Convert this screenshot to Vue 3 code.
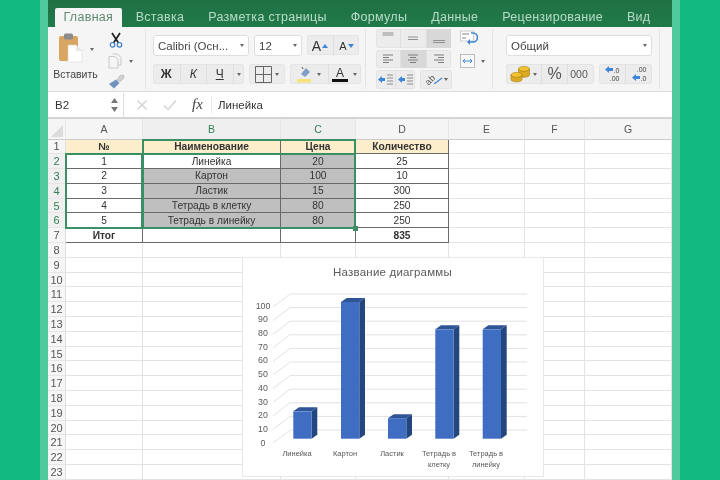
<template>
  <div class="page">
    <div class="window">
      <!-- вкладки -->
      <div class="tabs">
        <span v-for="(t, i) in tabs" :key="t" class="tab" :class="{ active: i === 0 }">{{ t }}</span>
      </div>

      <!-- лента -->
      <div class="ribbon">
        <div class="group g-clip">
          <div class="paste">
            <svg class="ic-paste" width="26" height="30" viewBox="0 0 26 30">
              <rect x="1" y="3" width="19" height="25" rx="2" fill="#d9a662" />
              <rect x="6" y="0.5" width="9" height="6" rx="1.5" fill="#8c8c8c" />
              <path d="M10 12h8l6 6v11H10z" fill="#fff" stroke="#d8d8d8" stroke-width=".6" />
              <path d="M18 12v6h6" fill="#e8e8e8" />
            </svg>
            <span class="paste-label">Вставить</span>
          </div>
          <span class="caret paste-caret"></span>
          <div class="clip-tools">
            <svg width="16" height="16" viewBox="0 0 16 16">
              <path d="M4 1l6.5 10M12 1L5.500 11" stroke="#222" stroke-width="1.7" fill="none" />
              <circle cx="4.500" cy="12.800" r="2.300" fill="none" stroke="#3f7fc9" stroke-width="1.200" />
              <circle cx="11.500" cy="12.800" r="2.300" fill="none" stroke="#3f7fc9" stroke-width="1.200" />
            </svg>
            <div class="copy-row">
              <svg width="14" height="16" viewBox="0 0 14 16">
                <path d="M1 3.500h6l3 3v8.500H1z" fill="#f5f5f5" stroke="#c8c8c8" />
                <path d="M4.500 1h5l3.500 3.500V12h-3" fill="none" stroke="#c8c8c8" />
              </svg>
              <span class="caret"></span>
            </div>
            <svg width="17" height="15" viewBox="0 0 17 15">
              <path d="M9 6l3-4.500 3.500-.5.500 3-3.500 3.500z" fill="#d0d0d0" stroke="#a8a8a8" stroke-width=".5" />
              <path d="M1 10l7-4.500 3.500 3.500L6 14.500z" fill="#6f93bd" />
            </svg>
          </div>
        </div>

        <div class="group g-font">
          <div class="row">
            <div class="select font-sel"><span>Calibri (Осн...</span><i class="caret"></i></div>
            <div class="select size-sel"><span>12</span><i class="caret"></i></div>
            <div class="btns">
              <span class="btn grow-a">A<svg width="6" height="4" viewBox="0 0 6 4"><path d="M0 4l3-4 3 4z" fill="#3f86d6" /></svg></span>
              <span class="btn shrink-a">A<svg width="6" height="4" viewBox="0 0 6 4"><path d="M0 0l3 4 3-4z" fill="#3f86d6" /></svg></span>
            </div>
          </div>
          <div class="row row2">
            <div class="btns biu">
              <span class="btn b-w bold">Ж</span>
              <span class="btn b-w ital">К</span>
              <span class="btn b-w under">Ч</span>
              <span class="btn b-c"><i class="caret"></i></span>
            </div>
            <div class="btns borders">
              <span class="btn">
                <svg width="17" height="17" viewBox="0 0 17 17"><path d="M.5.500h16v16H.5zM8.500.500v16M.5 8.500h16" fill="none" stroke="#666" /></svg>
                <i class="caret"></i>
              </span>
            </div>
            <div class="btns colors">
              <span class="btn">
                <svg width="16" height="18" viewBox="0 0 16 18">
                  <path d="M5 9l5-6 4 4-5 5z" fill="#7d9fc7" />
                  <path d="M6 2l1 2" stroke="#555" />
                  <rect x="1" y="14" width="14" height="3.500" fill="#f7e27a" />
                </svg>
                <i class="caret"></i>
              </span>
              <span class="btn color-a">
                <span class="a-mark">A</span>
                <i class="caret"></i>
              </span>
            </div>
          </div>
        </div>

        <div class="group g-align">
          <div class="align-col">
            <div class="btns al">
              <span v-for="(v, i) in valign" :key="i" class="btn" :class="{ on: i === 2 }">
                <svg width="14" height="14" viewBox="0 0 14 14"><path :d="v" stroke="#8f8f8f" stroke-width="1.200" fill="none" /></svg>
              </span>
            </div>
            <div class="btns al">
              <span v-for="(v, i) in halign" :key="i" class="btn" :class="{ on: i === 1 }">
                <svg width="14" height="14" viewBox="0 0 14 14"><path :d="v" stroke="#7c7c7c" fill="none" /></svg>
              </span>
            </div>
            <div class="al-last">
              <div class="btns al-ind">
                <span v-for="n in 2" :key="n" class="btn">
                  <svg width="15" height="11" viewBox="0 0 15 11">
                    <path d="M0 5.500l4-3.500v2h3v3H4v2z" fill="#3f86d6" />
                    <path d="M9 1h6M9 4h6M9 7h6M9 10h6" stroke="#8a8a8a" />
                  </svg>
                </span>
              </div>
              <div class="btns al-rot">
                <span class="btn">
                  <span class="ab">ab</span>
                  <svg class="ab-line" width="9" height="9" viewBox="0 0 9 9"><path d="M0 9l8-6" stroke="#3f86d6" stroke-width="1.300" /></svg>
                  <i class="caret"></i>
                </span>
              </div>
            </div>
          </div>
          <div class="wrap-col">
            <svg width="18" height="16" viewBox="0 0 18 16">
              <rect x=".5" y="1" width="13" height="10" fill="#fff" stroke="#ccc" />
              <path d="M2 4h7M2 8h4" stroke="#888" />
              <path d="M11 3h2a3.500 3.500 0 010 9H9" stroke="#3f86d6" stroke-width="1.600" fill="none" />
              <path d="M10 9l-3 3 3 3z" fill="#3f86d6" />
            </svg>
            <div class="merge">
              <svg width="15" height="14" viewBox="0 0 15 14">
                <rect x=".5" y=".5" width="14" height="13" fill="#f8f8f8" stroke="#bdbdbd" />
                <path d="M3 7h9M5 5L3 7l2 2M10 5l2 2-2 2" stroke="#3f86d6" fill="none" />
              </svg>
              <span class="caret"></span>
            </div>
          </div>
        </div>

        <div class="group g-num">
          <div class="select num-sel"><span>Общий</span><i class="caret"></i></div>
          <div class="row row2 num-row">
            <div class="btns money">
              <span class="btn coins">
                <svg width="20" height="18" viewBox="0 0 20 18">
                  <ellipse cx="14" cy="4" rx="5.500" ry="2.600" fill="#f2c230" stroke="#a97f16" stroke-width=".6" />
                  <path d="M8.500 4v6c0 3 11 3 11 0V4c0 3-11 3-11 0z" fill="#dba922" stroke="#a97f16" stroke-width=".6" />
                  <ellipse cx="6.500" cy="10" rx="5.500" ry="2.600" fill="#f2c230" stroke="#a97f16" stroke-width=".6" />
                  <path d="M1 10v4.500c0 3 11 3 11 0V10c0 3-11 3-11 0z" fill="#dba922" stroke="#a97f16" stroke-width=".6" />
                </svg>
                <i class="caret"></i>
              </span>
              <span class="btn pct">%</span>
              <span class="btn thou">000</span>
            </div>
            <div class="btns dec">
              <span class="btn">
                <span class="dec-txt"><svg width="8" height="7" viewBox="0 0 8 7"><path d="M0 3.500L4 0v2h4v3H4v2z" fill="#3f86d6" /></svg>.0<br />.00</span>
              </span>
              <span class="btn">
                <span class="dec-txt">.00<br /><svg width="8" height="7" viewBox="0 0 8 7"><path d="M0 3.500L4 0v2h4v3H4v2z" fill="#3f86d6" /></svg>.0</span>
              </span>
            </div>
          </div>
        </div>
      </div>

      <!-- строка формул -->
      <div class="formula">
        <div class="name-box">
          <span>B2</span>
          <svg width="7" height="16" viewBox="0 0 7 16"><path d="M0 6l3.500-5L7 6zM0 10l3.500 5L7 10z" fill="#777" /></svg>
        </div>
        <div class="fx-tools">
          <svg width="12" height="12" viewBox="0 0 12 12"><path d="M1.500 1.500l9 9M10.500 1.500l-9 9" stroke="#d4d4d4" stroke-width="1.500" /></svg>
          <svg width="14" height="12" viewBox="0 0 14 12"><path d="M1 6.500L5 10.500 13 1.500" stroke="#d4d4d4" stroke-width="1.500" fill="none" /></svg>
          <span class="fx">fx</span>
        </div>
        <span class="formula-text">Линейка</span>
      </div>

      <!-- лист -->
      <div class="sheet-wrap">
        <div class="sheet">
          <div class="corner"><i></i></div>
          <div v-for="c in columns" :key="c" class="col-head" :class="{ sel: c === 'B' || c === 'C' }">{{ c }}</div>
          <template v-for="r in rowCount" :key="r">
            <div class="row-head" :class="{ sel: r >= 2 && r <= 6 }">{{ r }}</div>
            <div v-for="(c, ci) in columns" :key="c" class="cell" :class="cellClass(r, ci)">{{ cellText(r, ci) }}</div>
          </template>
        </div>

        <!-- выделение: та же сетка поверх листа -->
        <div class="sheet ranges">
          <div class="range range-a"></div>
          <div class="range range-bc"><i class="handle"></i></div>
          <div class="range range-head"></div>
        </div>

        <!-- диаграмма -->
        <div class="chart">
          <svg width="300" height="218" viewBox="243 258 300 218">
            <text x="392.500" y="276" class="c-title" text-anchor="middle">Название диаграммы</text>
            <g stroke="#e2e2e2" stroke-width="1" fill="none">
              <path v-for="t in ticks" :key="t" :d="gridPath(t)" />
            </g>
            <text v-for="t in ticks" :key="'l' + t" x="263" :y="445.600 - t * 1.37" class="c-axis" text-anchor="middle">{{ t }}</text>
            <g v-for="b in bars" :key="b.x">
              <path :d="`M${b.x} ${barTop(b)}l5.700-4h18.300l-5.700 4z`" fill="#2f5597" />
              <path :d="`M${b.x + 18.300} ${barTop(b)}l5.700-4V434.700L${b.x + 18.300} 438.700z`" fill="#24467f" />
              <rect :x="b.x" :y="barTop(b)" width="18.300" :height="438.700 - barTop(b)" fill="#3f6dc2" />
            </g>
            <g v-for="b in bars" :key="'t' + b.x">
              <text v-for="(l, i) in b.label" :key="l" :x="b.cx" :y="456 + i * 10.700" class="c-cat" text-anchor="middle">{{ l }}</text>
            </g>
          </svg>
        </div>
      </div>
    </div>
  </div>
</template>

<script setup>
const tabs = ['Главная', 'Вставка', 'Разметка страницы', 'Формулы', 'Данные', 'Рецензирование', 'Вид']
const columns = ['A', 'B', 'C', 'D', 'E', 'F', 'G']
const rowCount = 23

const table = [
  ['№', 'Наименование', 'Цена', 'Количество'],
  ['1', 'Линейка', '20', '25'],
  ['2', 'Картон', '100', '10'],
  ['3', 'Ластик', '15', '300'],
  ['4', 'Тетрадь в клетку', '80', '250'],
  ['5', 'Тетрадь в линейку', '80', '250'],
  ['Итог', '', '', '835']
]

const valign = ['M1.500 2h11M1.500 4h11', 'M2 6h10M2 8.500h10', 'M1 9.500h12M1 11.500h12']
const halign = [
  'M2 3h10M2 5.500h6M2 8h10M2 10.500h6',
  'M2 3h10M4 5.500h6M2 8h10M4 10.500h6',
  'M2 3h10M6 5.500h6M2 8h10M6 10.500h6'
]

const ticks = [0, 10, 20, 30, 40, 50, 60, 70, 80, 90, 100]
const bars = [
  { x: 293.3, cx: 297, v: 20, label: ['Линейка'] },
  { x: 341, cx: 345, v: 100, label: ['Картон'] },
  { x: 388, cx: 392, v: 15, label: ['Ластик'] },
  { x: 435.3, cx: 439, v: 80, label: ['Тетрадь в', 'клетку'] },
  { x: 482.7, cx: 486, v: 80, label: ['Тетрадь в', 'линейку'] }
]

const barTop = (b) => 438.7 - b.v * 1.367

const gridPath = (t) => {
  const y = 430 - t * 1.36
  return `M273 ${y + 13}L290 ${y}H527`
}

const cellText = (r, ci) => table[r - 1]?.[ci] ?? ''

const cellClass = (r, ci) => {
  const inTable = r <= 7 && ci <= 3
  return {
    tbl: inTable,
    head: r === 1 && ci <= 3,
    grey: (r >= 3 && r <= 6 && ci === 1) || (r >= 2 && r <= 6 && ci === 2),
    strong: r === 7 && (ci === 0 || ci === 3)
  }
}
</script>

<style>
html,
body {
  margin: 0;
  background: #12b981;
}
</style>

<style scoped>
.page {
  width: 720px;
  height: 480px;
  overflow: hidden;
  box-sizing: border-box;
  padding: 0 40px;
  background: #12b981;
  font-family: "Liberation Sans", Arial, sans-serif;
  filter: blur(0.35px);
}

.window {
  height: 480px;
  border: solid #4fca9c;
  border-width: 0 8px;
  background: #fff;
  overflow: hidden;
}

.tabs {
  height: 27px;
  box-sizing: border-box;
  padding: 8px 0 0 7px;
  display: flex;
  background: linear-gradient(#1f7044, #217a4a);
}

.tab {
  padding: 0 12px;
  font-size: 12.500px;
  letter-spacing: 0.3px;
  line-height: 19px;
  color: #b9dcc8;
  white-space: nowrap;
}

.tab.active {
  background: #f5f5f5;
  color: #5f8a72;
  padding: 0 8.500px;
  margin-right: 2px;
  border-radius: 2px 2px 0 0;
}

.ribbon {
  height: 65px;
  box-sizing: border-box;
  display: flex;
  background: #f5f5f5;
  border-bottom: 1px solid #dcdcdc;
}

.group {
  box-sizing: border-box;
  border-right: 1px solid #e4e4e4;
  margin: 2px 0;
}

.g-clip {
  width: 98px;
  display: flex;
  position: relative;
}

.paste {
  width: 54px;
  display: flex;
  flex-direction: column;
  align-items: center;
  padding: 4px 0 0 1px;
  box-sizing: border-box;
  position: relative;
}

.ic-paste {
  margin-left: -9px;
}

.paste-label {
  font-size: 10.500px;
  margin-top: 5px;
  color: #444;
  white-space: nowrap;
}

.paste-caret {
  position: absolute;
  left: 42px;
  top: 19px;
}

.clip-tools {
  margin-left: 6px;
  display: flex;
  flex-direction: column;
  gap: 5px;
  padding-top: 3px;
}

.copy-row {
  display: flex;
  align-items: center;
  gap: 7px;
  height: 16px;
}

.caret {
  display: inline-block;
  width: 0;
  height: 0;
  border: 2.500px solid transparent;
  border-top: 3px solid #666;
  border-bottom: 0;
}

.g-font {
  width: 220px;
  padding: 6px 0 0 7px;
}

.row {
  display: flex;
  gap: 5px;
}

.row2 {
  margin-top: 8px;
}

.select {
  height: 21px;
  box-sizing: border-box;
  background: #fff;
  border: 1px solid #dedede;
  border-radius: 3px;
  display: flex;
  align-items: center;
  justify-content: space-between;
  padding: 0 4px;
  font-size: 11.500px;
  color: #444;
  white-space: nowrap;
}

.font-sel {
  width: 96px;
}

.size-sel {
  width: 48px;
}

.btns {
  display: flex;
  height: 20px;
  background: #ececec;
  border-radius: 3px;
  box-shadow: inset 0 0 0 1px #e4e4e4;
}

.btn {
  display: flex;
  align-items: center;
  justify-content: center;
  gap: 3px;
  position: relative;
  color: #333;
  box-sizing: border-box;
}

.btn + .btn {
  border-left: 1px solid #dfdfdf;
}

.grow-a,
.shrink-a {
  width: 26px;
  height: 21px;
  gap: 1px;
}

.grow-a {
  font-size: 14px;
}

.shrink-a {
  font-size: 11px;
}

.b-w {
  width: 26.500px;
  font-size: 12px;
}

.b-c {
  width: 11px;
}

.bold {
  font-weight: 700;
}

.ital {
  font-style: italic;
}

.under {
  text-decoration: underline;
}

.borders .btn {
  width: 36px;
}

.colors .btn {
  width: 38px;
  gap: 5px;
}

.colors .color-a {
  width: 33px;
}

.a-mark {
  font-size: 12px;
  line-height: 12px;
  width: 16px;
  text-align: center;
  border-bottom: 3px solid #111;
}

.g-align {
  width: 127px;
  display: flex;
  padding: 0 0 0 10px;
}

.align-col {
  width: 76px;
  display: flex;
  flex-direction: column;
  gap: 2px;
}

.al {
  width: 75px;
  height: 19px;
}

.al .btn {
  flex: 1;
}

.btn.on {
  background: #d8d8d8;
}

.al-last {
  display: flex;
  gap: 5px;
}

.al-ind {
  width: 50px;
  height: 19px;
}

.al-ind .btn {
  flex: 1;
}

.al-rot {
  width: 32px;
  height: 19px;
  flex: none;
}

.al-rot .btn {
  width: 32px;
  gap: 0;
  padding-left: 1px;
}

.ab {
  font-size: 9px;
  color: #555;
  transform: rotate(-45deg);
}

.ab-line {
  margin-left: -2px;
  margin-right: 1px;
}

.wrap-col {
  margin-left: 8px;
  display: flex;
  flex-direction: column;
  gap: 8px;
  padding-top: 1px;
}

.merge {
  display: flex;
  align-items: center;
  gap: 6px;
  width: 26px;
}

.g-num {
  width: 167px;
  padding: 6px 0 0 13px;
}

.num-sel {
  width: 146px;
}

.num-row {
  width: 146px;
}

.money .coins {
  width: 35px;
  gap: 3px;
}

.pct {
  width: 26px;
  font-size: 16px;
  color: #555;
}

.thou {
  width: 27px;
  padding-right: 4px;
  font-size: 10.500px;
  color: #555;
}

.dec {
  width: 53px;
}

.dec .btn {
  flex: 1;
}

.dec-txt {
  font-size: 7px;
  line-height: 8px;
  color: #444;
  text-align: right;
}

.dec-txt svg {
  margin-right: 1px;
}

.formula {
  height: 25px;
  box-sizing: border-box;
  display: flex;
  align-items: center;
  background: #fff;
}

.name-box {
  width: 76px;
  height: 24px;
  box-sizing: border-box;
  padding: 0 5px 0 7px;
  border-right: 1px solid #dedede;
  display: flex;
  align-items: center;
  justify-content: space-between;
  font-size: 11.500px;
  color: #333;
}

.fx-tools {
  display: flex;
  align-items: center;
  width: 88px;
  height: 17px;
  box-sizing: border-box;
  padding-left: 12px;
  gap: 15px;
  border-right: 1px solid #e6e6e6;
}

.fx {
  font-family: "Liberation Serif", serif;
  font-style: italic;
  font-size: 15px;
  color: #444;
}

.formula-text {
  margin-left: 6px;
  font-size: 11.500px;
  color: #333;
}

.sheet-wrap {
  position: relative;
  height: 363px;
  overflow: hidden;
  border-top: 2px solid #d4d4d4;
}

.sheet {
  display: grid;
  grid-template-columns: 18px 77px 138px 75px 93px 76px 60px 87px;
  grid-template-rows: 20.500px repeat(23, 14.800px);
  font-size: 10.200px;
  color: #333;
}

.ranges {
  position: absolute;
  inset: 0;
  pointer-events: none;
}

.corner {
  background: #f5f5f5;
  border-right: 1px solid #e8e8e8;
  border-bottom: 1px solid #ccc;
  position: relative;
}

.corner i {
  position: absolute;
  right: 2px;
  bottom: 2px;
  width: 0;
  height: 0;
  border-left: 12px solid transparent;
  border-bottom: 12px solid #dcdcdc;
}

.col-head {
  background: #f5f5f5;
  border-right: 1px solid #e6e6e6;
  border-bottom: 1px solid #ccc;
  display: flex;
  align-items: center;
  justify-content: center;
  font-size: 10.500px;
  color: #555;
}

.col-head.sel {
  background: #efefef;
  color: #2f7d55;
}

.row-head {
  background: #f6f6f6;
  border-right: 1px solid #dedede;
  border-bottom: 1px solid #e6e6e6;
  display: flex;
  align-items: center;
  justify-content: center;
  font-size: 11px;
  color: #555;
}

.row-head.sel {
  background: #f0f0f0;
  color: #2f7d55;
}

.cell,
.row-head,
.col-head {
  box-sizing: border-box;
  min-width: 0;
  overflow: hidden;
  white-space: nowrap;
}

.cell {
  border-right: 1px solid #e3e3e3;
  border-bottom: 1px solid #e3e3e3;
  display: flex;
  align-items: center;
  justify-content: center;
  text-align: center;
}

.cell.tbl {
  border-right-color: #6a6a6a;
  border-bottom-color: #6a6a6a;
}

.cell.head {
  background: #fdeecb;
  font-weight: 700;
}

.cell.grey {
  background: #bfbfbf;
}

.cell.strong {
  font-weight: 700;
}

.range {
  box-sizing: border-box;
  border: 2px solid #3c8f64;
  margin: -1px 0 -1px -1px;
}

.range-a {
  grid-column: 2;
  grid-row: 3 / 8;
}

.range-bc {
  grid-column: 3 / 5;
  grid-row: 2 / 8;
  position: relative;
}

.range-head {
  grid-column: 3 / 5;
  grid-row: 3;
  border-width: 2px 0 0;
  margin: -1px 0 0;
}

.handle {
  position: absolute;
  right: -4px;
  bottom: -4px;
  width: 5px;
  height: 5px;
  background: #3c8f64;
}

.chart {
  position: absolute;
  left: 195px;
  top: 139px;
  width: 300px;
  height: 218px;
  background: #fff;
  box-shadow: 0 0 0 1px #e8e8e8;
}

.chart svg {
  display: block;
}

.c-title {
  font-size: 11.500px;
  fill: #595959;
  letter-spacing: 0.2px;
}

.c-axis {
  font-size: 8.800px;
  fill: #595959;
}

.c-cat {
  font-size: 7.500px;
  fill: #595959;
}
</style>
